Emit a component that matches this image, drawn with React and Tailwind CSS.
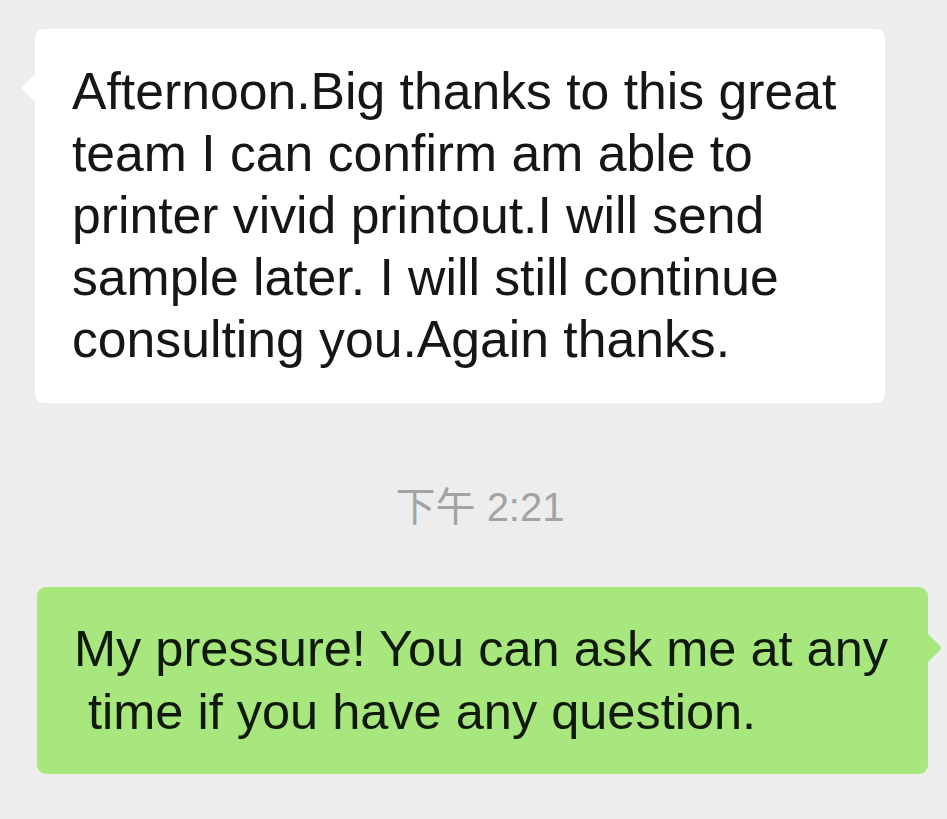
import React from 'react';

function Arrow({ side, color }) {
  // small speech-bubble tail, tip slightly rounded
  const d =
    side === 'left'
      ? 'M16 0 L16 30 L2.5 16.6 Q1 15 2.5 13.4 Z'
      : 'M0 0 L0 30 L13.5 16.6 Q15 15 13.5 13.4 Z';
  return (
    <svg
      width="16"
      height="30"
      viewBox="0 0 16 30"
      className={`absolute ${side === 'left' ? '-left-[15px] top-[44px]' : '-right-[15px] top-[46px]'}`}
    >
      <path d={d} fill={color} />
    </svg>
  );
}

export default function App() {
  return (
    <div
      className="min-h-[819px] w-full bg-[#ededed] pt-[29px]"
      style={{ fontFamily: '"Liberation Sans", "Noto Sans CJK SC", Arial, sans-serif' }}
    >
      <div className="relative ml-[35px] w-[850px] rounded-[8px] bg-white pl-[37px] pr-4 pt-[31px] pb-[33px] text-[51.7px] leading-[62px] text-[#161616]">
        <Arrow side="left" color="#ffffff" />
        Afternoon.Big thanks to this great
        <br />
        team I can confirm am able to
        <br />
        printer vivid printout.I will send
        <br />
        sample later. I will still continue
        <br />
        consulting you.Again thanks.
      </div>

      <div className="mt-[80px] flex justify-center pl-[13px] text-[40px] leading-[48px] text-[#a3a3a3]">
        下午 2:21
      </div>

      <div className="relative mt-[56px] ml-[37px] w-[891px] rounded-[9px] bg-[#a8e77d] pl-[37px] pr-4 pt-[30px] pb-[31px] text-[50.5px] leading-[63px] text-[#0f1a0c]">
        <Arrow side="right" color="#a8e77d" />
        My pressure! You can ask me at any
        <br />
        <span className="whitespace-pre"> time if you have any question.</span>
      </div>
    </div>
  );
}
